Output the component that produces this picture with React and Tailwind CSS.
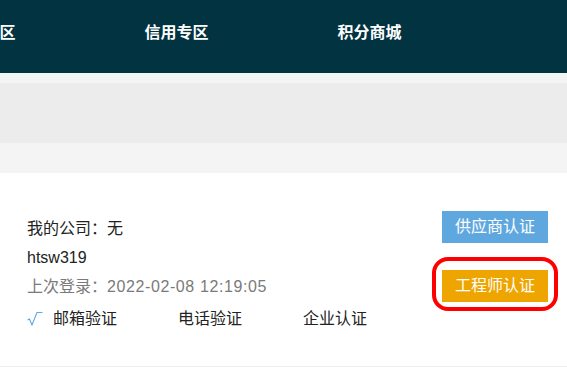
import React from "react";

const navItems = ["供应专区", "信用专区", "积分商城"];
const checks = [
    { label: "邮箱验证", done: true },
    { label: "电话验证", done: false },
    { label: "企业认证", done: false },
];

export default function App() {
    return (
        <div
            className="w-[567px] h-[367px] overflow-hidden bg-white"
            style={{ fontFamily: '"Liberation Sans", "Noto Sans CJK SC", sans-serif' }}
        >
            {/* top nav */}
            <div className="h-[73px] bg-[#013341] flex items-start pt-[22px] ml-[-113px]">
                {navItems.map((item) => (
                    <div key={item} className="w-[193px] shrink-0 text-center text-white text-[16px] font-bold leading-[22px]">
                        {item}
                    </div>
                ))}
            </div>

            {/* breadcrumb band */}
            <div className="h-[10px] bg-[#f4f4f4]" />
            <div className="h-[60px] bg-[#ececec]" />
            <div className="h-[30px] bg-[#f4f4f4]" />

            {/* user info */}
            <div className="h-[194px] border-b border-[#eeeeee] flex justify-between pl-[27px] pr-[19px]">
                <div className="pt-[41px] text-[16px] text-[#222]">
                    <div className="leading-[29px]">我的公司：无</div>
                    <div className="leading-[29px]">htsw319</div>
                    <div className="leading-[29px] text-[#7a7a7a]">
                        上次登录：<span className="tracking-[0.6px]">2022-02-08 12:19:05</span>
                    </div>
                    <div className="flex leading-[29px] mt-[3px]">
                        {checks.map((c) => (
                            <div key={c.label} className="w-[125px] flex items-center shrink-0">
                                <span className="w-[26px] flex items-center">
                                    {c.done && (
                                        <svg width="16" height="15" viewBox="0 0 16 15" fill="none" stroke="#5ea8e0" strokeWidth="1.1">
                                            <path d="M0.5 9 L2.5 8 L5 14 L10 1.5 L15.5 1.5" />
                                        </svg>
                                    )}
                                </span>
                                <span>{c.label}</span>
                            </div>
                        ))}
                    </div>
                </div>

                <div className="pt-[38px] flex flex-col items-end">
                    <button className="w-[106px] h-[32px] bg-[#5fa8df] text-white text-[16px] leading-[32px]">
                        供应商认证
                    </button>
                    <div className="relative mt-[27px]">
                        <button className="w-[106px] h-[32px] bg-[#efa500] text-white text-[16px] leading-[32px]">
                            工程师认证
                        </button>
                        <div className="absolute left-[-10px] right-[-10px] top-[-13px] bottom-[-9px] border-[4px] border-[#ff0000] rounded-[16px]" />
                    </div>
                </div>
            </div>
        </div>
    );
}
